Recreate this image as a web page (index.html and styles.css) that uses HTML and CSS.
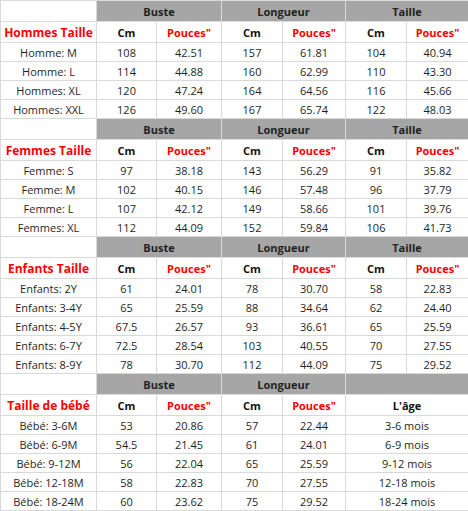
FILE: index.html
```html
<!DOCTYPE html>
<html lang="fr">
<head>
<meta charset="utf-8">
<title>Tableau des tailles</title>
<link rel="stylesheet" href="styles.css">
</head>
<body>
<table class="sizes">
  <colgroup>
    <col class="c1"><col class="c2"><col class="c3"><col class="c4"><col class="c5"><col class="c6"><col class="c7">
  </colgroup>
  <tbody>
    <tr class="head"><td class="blank"></td><th colspan="2">Buste</th><th colspan="2">Longueur</th><th colspan="2">Taille</th></tr>
    <tr class="sub"><td class="title">Hommes Taille</td><td class="cm">Cm</td><td class="in">Pouces"</td><td class="cm">Cm</td><td class="in">Pouces"</td><td class="cm">Cm</td><td class="in">Pouces"</td></tr>
    <tr><td>Homme: M</td><td>108</td><td>42.51</td><td>157</td><td>61.81</td><td>104</td><td>40.94</td></tr>
    <tr><td>Homme: L</td><td>114</td><td>44.88</td><td>160</td><td>62.99</td><td>110</td><td>43.30</td></tr>
    <tr><td>Hommes: XL</td><td>120</td><td>47.24</td><td>164</td><td>64.56</td><td>116</td><td>45.66</td></tr>
    <tr><td>Hommes: XXL</td><td>126</td><td>49.60</td><td>167</td><td>65.74</td><td>122</td><td>48.03</td></tr>

    <tr class="head"><td class="blank"></td><th colspan="2">Buste</th><th colspan="2">Longueur</th><th colspan="2">Taille</th></tr>
    <tr class="sub"><td class="title">Femmes Taille</td><td class="cm">Cm</td><td class="in">Pouces"</td><td class="cm">Cm</td><td class="in">Pouces"</td><td class="cm">Cm</td><td class="in">Pouces"</td></tr>
    <tr><td>Femme: S</td><td>97</td><td>38.18</td><td>143</td><td>56.29</td><td>91</td><td>35.82</td></tr>
    <tr><td>Femme: M</td><td>102</td><td>40.15</td><td>146</td><td>57.48</td><td>96</td><td>37.79</td></tr>
    <tr><td>Femme: L</td><td>107</td><td>42.12</td><td>149</td><td>58.66</td><td>101</td><td>39.76</td></tr>
    <tr><td>Femmes: XL</td><td>112</td><td>44.09</td><td>152</td><td>59.84</td><td>106</td><td>41.73</td></tr>

    <tr class="head"><td class="blank"></td><th colspan="2">Buste</th><th colspan="2">Longueur</th><th colspan="2">Taille</th></tr>
    <tr class="sub"><td class="title">Enfants Taille</td><td class="cm">Cm</td><td class="in">Pouces"</td><td class="cm">Cm</td><td class="in">Pouces"</td><td class="cm">Cm</td><td class="in">Pouces"</td></tr>
    <tr><td>Enfants: 2Y</td><td>61</td><td>24.01</td><td>78</td><td>30.70</td><td>58</td><td>22.83</td></tr>
    <tr><td>Enfants: 3-4Y</td><td>65</td><td>25.59</td><td>88</td><td>34.64</td><td>62</td><td>24.40</td></tr>
    <tr><td>Enfants: 4-5Y</td><td>67.5</td><td>26.57</td><td>93</td><td>36.61</td><td>65</td><td>25.59</td></tr>
    <tr><td>Enfants: 6-7Y</td><td>72.5</td><td>28.54</td><td>103</td><td>40.55</td><td>70</td><td>27.55</td></tr>
    <tr><td>Enfants: 8-9Y</td><td>78</td><td>30.70</td><td>112</td><td>44.09</td><td>75</td><td>29.52</td></tr>

    <tr class="head"><td class="blank"></td><th colspan="2">Buste</th><th colspan="2">Longueur</th><th colspan="2"></th></tr>
    <tr class="sub"><td class="title">Taille de bébé</td><td class="cm">Cm</td><td class="in">Pouces"</td><td class="cm">Cm</td><td class="in">Pouces"</td><td class="cm" colspan="2">L'âge</td></tr>
    <tr><td>Bébé: 3-6M</td><td>53</td><td>20.86</td><td>57</td><td>22.44</td><td colspan="2">3-6 mois</td></tr>
    <tr><td>Bébé: 6-9M</td><td>54.5</td><td>21.45</td><td>61</td><td>24.01</td><td colspan="2">6-9 mois</td></tr>
    <tr><td>Bébé: 9-12M</td><td>56</td><td>22.04</td><td>65</td><td>25.59</td><td colspan="2">9-12 mois</td></tr>
    <tr><td>Bébé: 12-18M</td><td>58</td><td>22.83</td><td>70</td><td>27.55</td><td colspan="2">12-18 mois</td></tr>
    <tr><td>Bébé: 18-24M</td><td>60</td><td>23.62</td><td>75</td><td>29.52</td><td colspan="2">18-24 mois</td></tr>
  </tbody>
</table>
</body>
</html>
```

FILE: styles.css
```css
html, body {
  margin: 0;
  padding: 0;
  background: #ffffff;
}

.sizes {
  border-collapse: collapse;
  table-layout: fixed;
  width: 468px;
  font-family: "Open Sans", "DejaVu Sans", sans-serif;
  font-size: 11px;
  color: #1f1f1f;
}

.c1 { width: 96px; }
.c2 { width: 60px; }
.c3 { width: 65px; }
.c4 { width: 61px; }
.c5 { width: 63px; }
.c6 { width: 61px; }
.c7 { width: 62px; }

.sizes td,
.sizes th {
  border: 1px solid #d9d9d9;
  padding: 0;
  height: 18px;
  text-align: center;
  vertical-align: middle;
  white-space: nowrap;
  line-height: 15px;
}

.sizes tr.head th {
  background: #a6a6a6;
  font-weight: 700;
  font-size: 11px;
  color: #222222;
  height: 20px;
  border-color: #dcdcdc;
}

.sizes tr.head td.blank {
  background: #ffffff;
  height: 20px;
}

.sizes tr.sub td {
  height: 20px;
  font-weight: 700;
}

.sizes td.title {
  color: #ff0000;
  font-size: 12px;
}

.sizes td.cm {
  color: #111111;
}

.sizes td.in {
  color: #ff0000;
}
```
